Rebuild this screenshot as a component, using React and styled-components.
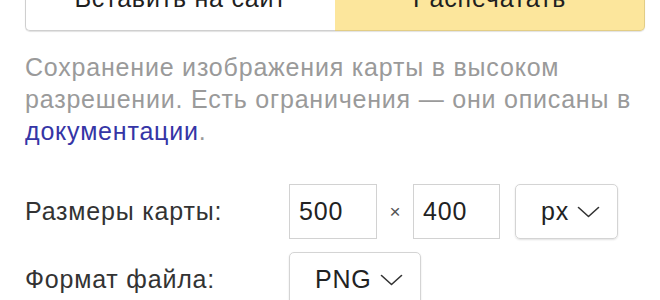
import React from "react";
import styled, { createGlobalStyle } from "styled-components";

const Global = createGlobalStyle`
  html, body { margin: 0; padding: 0; background: #ffffff; }
  body { font-family: "Liberation Sans", Arial, sans-serif; overflow: hidden; }
`;

const Page = styled.div`
  width: 620px;
  padding: 0 15px 0 25px;
  font-size: 25px;
  letter-spacing: 0.8px;
`;

const Tabs = styled.div`
  display: grid;
  grid-template-columns: 1fr 1fr;
  height: 66px;
  margin-top: -35px;
  border-radius: 5px;
  box-shadow: 0 1px 1px rgba(0, 0, 0, 0.12);
`;

const Tab = styled.div`
  display: flex;
  align-items: center;
  justify-content: center;
  color: #1f1f1f;
  background: ${(p) => (p.$active ? "#fce69c" : "#ffffff")};
  border: 1px solid ${(p) => (p.$active ? "#e2cd86" : "#cfcfcf")};
  border-radius: ${(p) => (p.$active ? "0 5px 5px 0" : "5px 0 0 5px")};
  ${(p) => (p.$active ? "border-left: none;" : "border-right: none;")}
`;

const Note = styled.p`
  margin: 20px 0 0;
  line-height: 32px;
  color: #9a9a9a;
`;

const Link = styled.a`
  color: #3535a6;
  text-decoration: none;
`;

const Form = styled.div`
  display: grid;
  grid-template-columns: 264px auto;
  align-items: center;
  row-gap: 13px;
  margin-top: 37px;
`;

const Label = styled.div`
  color: #333333;
`;

const Controls = styled.div`
  display: flex;
  align-items: center;
`;

const NumBox = styled.div`
  box-sizing: border-box;
  width: ${(p) => p.$w}px;
  height: 55px;
  display: flex;
  align-items: center;
  padding-left: 9px;
  border: 1px solid #d2d2d2;
  color: #222222;
`;

const Times = styled.span`
  width: 36px;
  text-align: center;
  font-size: 19px;
  letter-spacing: 0;
  color: #555555;
`;

const Select = styled.div`
  box-sizing: border-box;
  width: ${(p) => p.$w}px;
  height: 55px;
  margin-left: ${(p) => p.$ml || 0}px;
  display: flex;
  align-items: center;
  gap: 8px;
  padding-left: 25px;
  border: 1px solid #d4d4d4;
  border-radius: 5px;
  box-shadow: 0 1px 2px rgba(0, 0, 0, 0.12);
  color: #222222;
`;

const Chevron = () => (
  <svg width="23" height="12" viewBox="0 0 23 12" fill="none">
    <polyline points="1.5,1.5 11.5,10.5 21.5,1.5" stroke="#333" strokeWidth="1.6" strokeLinecap="round" strokeLinejoin="round" />
  </svg>
);

export default function App() {
  return (
    <>
      <Global />
      <Page>
        <Tabs>
          <Tab>Вставить на сайт</Tab>
          <Tab $active>Распечатать</Tab>
        </Tabs>
        <Note>
          Сохранение изображения карты в высоком разрешении. Есть ограничения — они описаны в{" "}
          <Link href="#">документации</Link>.
        </Note>
        <Form>
          <Label>Размеры карты:</Label>
          <Controls>
            <NumBox $w={88}>500</NumBox>
            <Times>×</Times>
            <NumBox $w={87}>400</NumBox>
            <Select $w={103} $ml={15}>
              px <Chevron />
            </Select>
          </Controls>
          <Label>Формат файла:</Label>
          <Controls>
            <Select $w={132}>
              PNG <Chevron />
            </Select>
          </Controls>
        </Form>
      </Page>
    </>
  );
}
